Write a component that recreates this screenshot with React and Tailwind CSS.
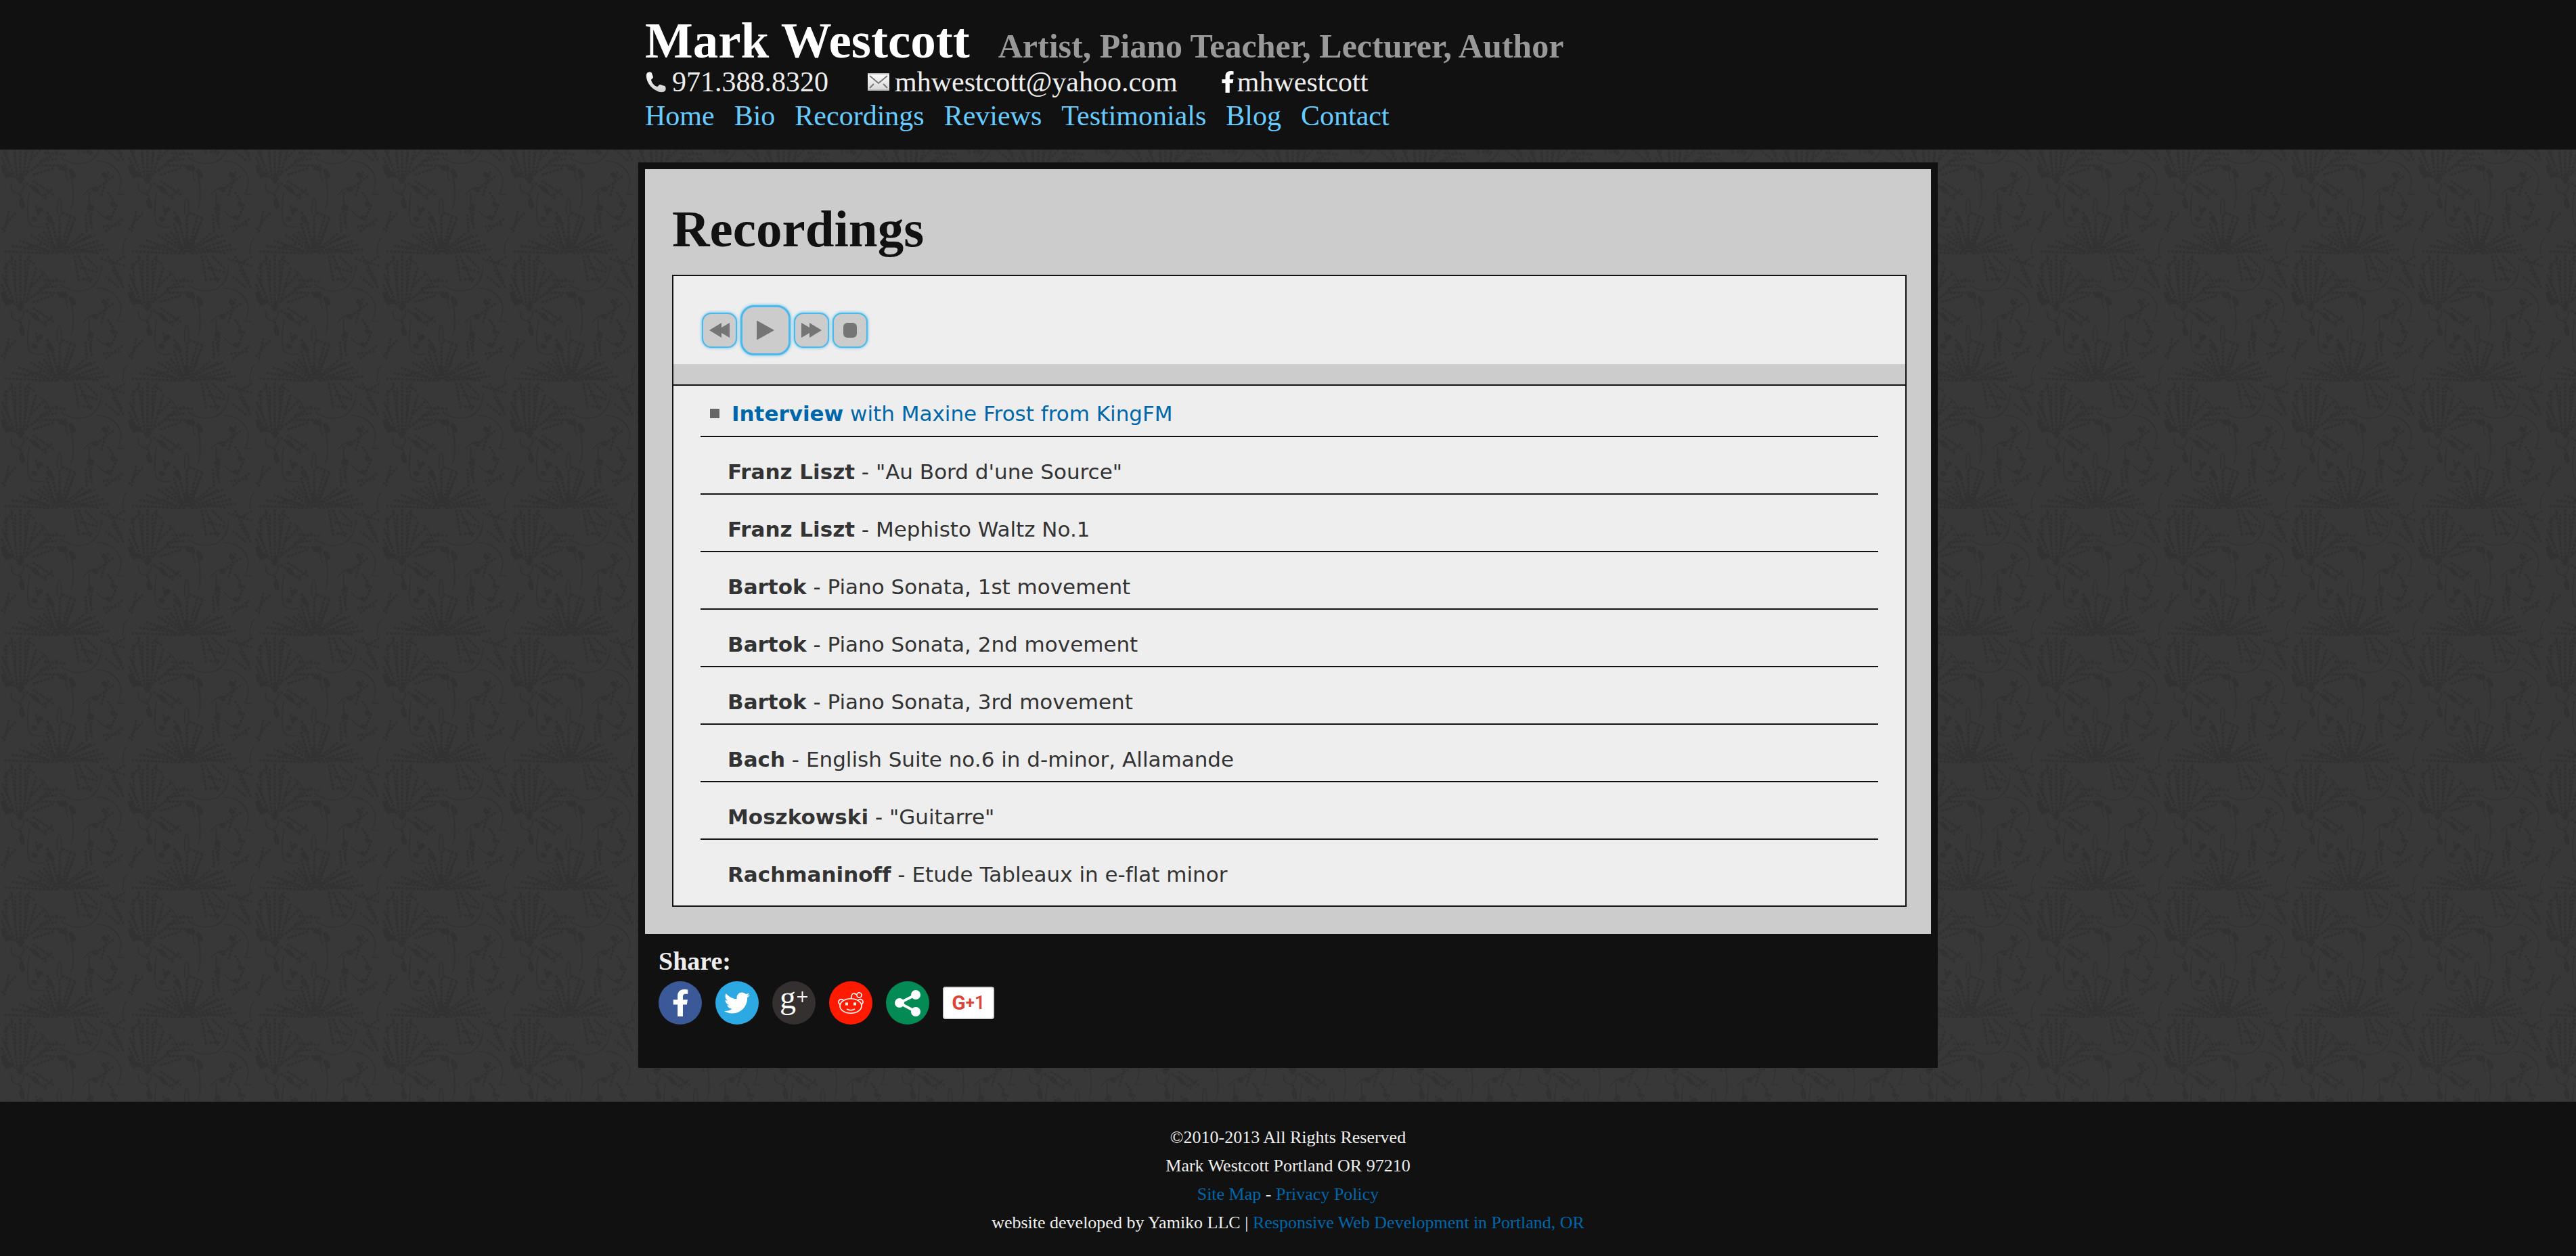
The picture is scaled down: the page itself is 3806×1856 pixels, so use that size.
import React from "react";
import { FaFacebookF, FaTwitter } from "react-icons/fa";

const NAV = ["Home", "Bio", "Recordings", "Reviews", "Testimonials", "Blog", "Contact"];

const TRACKS = [
  ["Franz Liszt", '"Au Bord d\'une Source"'],
  ["Franz Liszt", "Mephisto Waltz No.1"],
  ["Bartok", "Piano Sonata, 1st movement"],
  ["Bartok", "Piano Sonata, 2nd movement"],
  ["Bartok", "Piano Sonata, 3rd movement"],
  ["Bach", "English Suite no.6 in d-minor, Allamande"],
  ["Moszkowski", '"Guitarre"'],
  ["Rachmaninoff", "Etude Tableaux in e-flat minor"],
];

/* Repeating 188px floral damask tile behind the page. */
function DamaskBackground() {
  return (
    <svg className="absolute inset-0 -z-10 h-full w-full" aria-hidden="true">
      <defs>
        <pattern id="weave" width="4" height="4" patternUnits="userSpaceOnUse">
          <rect width="4" height="4" fill="#393939" />
          <path d="M0 1h2M2 3h2" stroke="#353535" strokeWidth="1" />
        </pattern>
        <pattern id="damask" width="188" height="188" patternUnits="userSpaceOnUse" viewBox="0 0 564 564">
          <g fill="none" stroke="#323232" strokeLinecap="round">
            <g strokeWidth="7" stroke="#333333">
              <path d="M180 70Q215 95 215 120M270 135Q330 175 390 155Q445 130 450 50M430 150Q500 150 530 210Q545 240 525 290" />
              <path d="M310 190Q335 300 315 360M130 290Q115 380 130 430Q160 450 190 440M255 385V340Q262 290 272 340V390" />
              <path d="M300 240Q285 200 298 180M50 250Q45 290 80 295Q110 280 105 250M545 564Q540 520 562 490" />
              <path d="M370 300Q400 260 440 270M395 290V350M430 370Q460 410 490 400M520 295L552 298" />
            </g>
            <g strokeWidth="12" strokeDasharray="2 15">
              <path d="M265 550V390M262 550L225 400M268 550L310 400M258 550L190 460M272 550L335 400M255 555L140 480M278 550L400 480M250 560L80 500M285 555L440 500M290 560L490 540M230 560L20 550M200 540L120 520M330 540L440 560" />
              <path d="M245 545L208 430M285 545L322 430M240 535L165 470M300 530L370 470M210 550L50 525M320 552L465 520M180 520L100 540M340 510L420 480" />
              <path d="M90 230V0M78 230L50 10M102 230L130 10M65 220L10 90M115 210L160 60M40 200L5 130M125 200L250 110M140 190L210 130M150 210L240 180M170 170L290 170" />
              <path d="M68 150V20M112 150V20M30 130L25 30M140 140L190 90M20 60L60 10M150 40L110 10M45 170L15 100M180 150L260 140M200 115L290 120" />
              <path d="M330 10L350 120M350 10L400 120M380 10L430 60M360 60L440 80M370 110H420M450 20L550 50M480 10L540 120M500 70L550 150M470 100L530 150M550 10L500 40" />
              <path d="M30 420L70 380M10 450L50 400M20 460L40 370M390 360L410 460M380 390L385 470M410 350L400 430M460 440L540 430M470 460L550 400M490 410L520 340M500 320L470 280M450 300L480 200M430 270L500 220" />
              <path d="M120 250L210 320M150 240L240 300M90 300L110 360M200 300L240 270M160 350L170 390M280 380L330 400M210 380L240 430" />
            </g>
            <g strokeWidth="22">
              <path d="M20 200L50 210M14 175L30 215M90 240L95 215M150 270L165 285M95 330L100 350M170 370L180 365M150 405L155 408M315 195L325 215M270 180L290 185M460 210L465 215M420 275L425 278M400 350L402 360M215 405L225 415M480 400L482 402M500 340L502 342M262 500L265 530" />
            </g>
          </g>
        </pattern>
      </defs>
      <rect width="100%" height="100%" fill="url(#weave)" />
      <rect width="100%" height="100%" fill="url(#damask)" />
    </svg>
  );
}

function PhoneIcon() {
  return (
    <svg viewBox="0 0 32 32" className="h-8 w-8" aria-hidden="true">
      <defs>
        <linearGradient id="phoneFill" x1="0" y1="0" x2="0" y2="1">
          <stop offset="0" stopColor="#ffffff" />
          <stop offset="1" stopColor="#cfcfcf" />
        </linearGradient>
      </defs>
      <path
        d="M3 3C5 1 9 1 10 3L12 9C12 11 9 12 9 13C10 18 14 22 18 23C20 23 20 20 22 20L29 22C31 23 31 27 30 29C27 32 22 32 17 29C8 25 2 15 2 8C2 6 2 4 3 3Z"
        fill="url(#phoneFill)"
      />
    </svg>
  );
}

function MailIcon() {
  return (
    <svg viewBox="0 0 32 26" className="h-[26px] w-8" aria-hidden="true">
      <defs>
        <linearGradient id="mailFill" x1="0" y1="0" x2="0" y2="1">
          <stop offset="0" stopColor="#ffffff" />
          <stop offset="1" stopColor="#d4d4d4" />
        </linearGradient>
      </defs>
      <rect width="32" height="26" fill="url(#mailFill)" />
      <path d="M0 1H32" stroke="#bdbdbd" strokeWidth="2" />
      <path d="M0 25H32" stroke="#a5a5a5" strokeWidth="1" />
      <path d="M3 4L16 15L29 4M3 22L9 16M29 22L23 16" fill="none" stroke="#777" strokeWidth="2" />
    </svg>
  );
}

function PlayerButton({ label, large, children }) {
  const size = large
    ? "h-[74px] w-[74px] rounded-[20px] border-[3px] shadow-[0_0_4px_#4db8ea]"
    : "h-[52px] w-[52px] rounded-[14px] border-[2px] shadow-[0_0_4px_#4db8ea]";
  return (
    <button
      type="button"
      aria-label={label}
      className={`flex items-center justify-center border-[#4db8ea] bg-[#ccc] text-[#757575] ${size}`}
    >
      {children}
    </button>
  );
}

function ShareLink({ label, color, children }) {
  return (
    <a href="#share" aria-label={label} className={`flex h-16 w-16 items-center justify-center rounded-full text-white ${color}`}>
      {children}
    </a>
  );
}

function Alien() {
  return (
    <svg viewBox="0 0 40 34" className="h-[34px] w-10" fill="none" stroke="#fff" strokeWidth="1.6" aria-hidden="true">
      <ellipse cx="20" cy="21.5" rx="16" ry="10.8" />
      <path d="M5 19.500A4 4 0 1 1 9 13M35 19.500A4 4 0 1 0 31 13" />
      <path d="M20.500 10.500Q21 2.500 25 3Q27 4 29 4.500" />
      <circle cx="32.500" cy="5.500" r="3.600" />
      <path d="M14 26Q20 29.500 26 26" />
      <rect x="12" y="16.500" width="4" height="4" fill="#fff" stroke="none" />
      <rect x="24" y="16.500" width="4" height="4" fill="#fff" stroke="none" />
    </svg>
  );
}

export default function App() {
  return (
    <div className="relative isolate flex min-h-screen flex-col bg-[#393939] font-['Liberation_Serif',serif] text-[#eee]">
      <DamaskBackground />

      <header className="bg-[#111] pt-6 pb-[25px]">
        <div className="mx-auto w-full max-w-[1920px] px-[10px]">
          <div className="flex flex-wrap items-baseline gap-x-[42px] font-bold">
            <h1 className="text-[75px] leading-[72px] text-white">Mark Westcott</h1>
            <p className="text-[50px] leading-[50px] text-[#999]">Artist, Piano Teacher, Lecturer, Author</p>
          </div>
          <div className="flex flex-wrap text-[42px] leading-[50px]">
            <a href="tel:9713888320" className="mr-[58px] flex items-center gap-2">
              <PhoneIcon />
              971.388.8320
            </a>
            <a href="mailto:mhwestcott@yahoo.com" className="mr-16 flex items-center gap-2">
              <MailIcon />
              mhwestcott@yahoo.com
            </a>
            <a href="#facebook" className="flex items-center gap-1">
              <FaFacebookF className="h-8 w-5 text-white" />
              mhwestcott
            </a>
          </div>
          <nav className="flex flex-wrap gap-x-[29px] text-[42px] leading-[50px] text-[#6cf]">
            {NAV.map((item) => (
              <a key={item} href={`#${item.toLowerCase()}`}>{item}</a>
            ))}
          </nav>
        </div>
      </header>

      <main className="mx-auto mt-[19px] mb-[50px] w-full max-w-[1920px] border-[10px] border-[#111] bg-[#111]">
        <section className="bg-[#ccc] pt-[42px] pr-9 pb-10 pl-10">
          <h2 className="mb-[22px] text-[77px] leading-[92px] font-bold text-[#111]">Recordings</h2>

          <div className="border-2 border-[#111] bg-[#eee]">
            <div className="flex items-center gap-[5px] px-[42px] pt-[43px] pb-[13px]">
              <PlayerButton label="Previous">
                <svg viewBox="0 0 30 22" className="h-[22px] w-[30px]" fill="currentColor" aria-hidden="true">
                  <path d="M0 11L18 0V7L30 0V22L18 15V22Z" />
                </svg>
              </PlayerButton>
              <PlayerButton label="Play" large>
                <svg viewBox="0 0 26 28" className="h-7 w-[26px]" fill="currentColor" aria-hidden="true">
                  <path d="M0 1Q0 0 1 0L26 14L1 28Q0 28 0 27Z" />
                </svg>
              </PlayerButton>
              <PlayerButton label="Next">
                <svg viewBox="0 0 30 22" className="h-[22px] w-[30px]" fill="currentColor" aria-hidden="true">
                  <path d="M30 11L12 0V7L0 0V22L12 15V22Z" />
                </svg>
              </PlayerButton>
              <PlayerButton label="Stop">
                <svg viewBox="0 0 20 22" className="h-[22px] w-5" fill="currentColor" aria-hidden="true">
                  <rect width="20" height="22" rx="6" />
                </svg>
              </PlayerButton>
            </div>
            <div className="h-8 border-b-2 border-[#111] bg-[#ccc]" />

            <ul className="px-10 font-['DejaVu_Sans',sans-serif] text-[31px] leading-10 text-[#333] [font-variant-ligatures:none]">
              <li className="flex items-center gap-[18px] border-b-2 border-[#111] pt-[21px] pb-[13px] pl-[14px]">
                <span className="h-[14px] w-[14px] bg-[#666]" />
                <a href="#interview" className="text-[#06a]">
                  <b>Interview</b> with Maxine Frost from KingFM
                </a>
              </li>
              {TRACKS.map(([composer, title]) => (
                <li
                  key={composer + title}
                  className="border-b-2 border-[#111] pt-[31px] pb-3 pl-10 last:border-b-0 last:pb-[26px]"
                >
                  <b>{composer}</b> - {title}
                </li>
              ))}
            </ul>
          </div>
        </section>

        <section className="px-5 pt-[18px] pb-[54px]">
          <h3 className="mb-2 text-[38px] leading-[44px] font-bold">Share:</h3>
          <div className="flex items-center gap-5">
            <ShareLink label="Facebook" color="bg-[#3b5998]">
              <FaFacebookF className="h-10 w-[25px]" />
            </ShareLink>
            <ShareLink label="Twitter" color="bg-[#2ca8e2]">
              <FaTwitter className="h-[38px] w-[38px]" />
            </ShareLink>
            <ShareLink label="Google Plus" color="bg-[#33302f]">
              <svg viewBox="0 0 64 64" className="h-16 w-16 overflow-visible" aria-hidden="true">
                <text x="11" y="40" fontSize="48" fill="#fff" fontFamily="Liberation Serif">g</text>
                <path d="M37 23H52M44.500 15V31" stroke="#fff" strokeWidth="2" />
              </svg>
            </ShareLink>
            <ShareLink label="Reddit" color="bg-[#ff1a00]">
              <Alien />
            </ShareLink>
            <ShareLink label="Share" color="bg-[#048a54]">
              <svg viewBox="0 0 64 64" className="h-16 w-16" fill="currentColor" aria-hidden="true">
                <path d="M44 20L20 32L44 45" fill="none" stroke="#fff" strokeWidth="4" />
                <circle cx="20" cy="32" r="7" />
                <circle cx="44" cy="20" r="7" />
                <circle cx="44" cy="45" r="7" />
              </svg>
            </ShareLink>
            <a
              href="#plusone"
              aria-label="Google +1"
              className="flex h-12 w-[76px] items-center justify-center rounded-[4px] border-2 border-[#d5d5d5] bg-white font-['Roboto',sans-serif] font-bold text-[#db4437]"
            >
              <span className="text-[30px] leading-none">G</span>
              <span className="text-2xl leading-none">+</span>
              <span className="text-[28px] leading-none font-medium">1</span>
            </a>
          </div>
        </section>
      </main>

      <footer className="mt-auto bg-[#111] px-5 pt-8 pb-7 text-center text-[26px] leading-[42px]">
        <p>©2010-2013 All Rights Reserved</p>
        <p>Mark Westcott Portland OR 97210</p>
        <p>
          <a href="#sitemap" className="text-[#06a]">Site Map</a> - <a href="#privacy" className="text-[#06a]">Privacy Policy</a>
        </p>
        <p>
          website developed by Yamiko LLC |{" "}
          <a href="#developer" className="text-[#06a]">Responsive Web Development in Portland, OR</a>
        </p>
      </footer>
    </div>
  );
}
